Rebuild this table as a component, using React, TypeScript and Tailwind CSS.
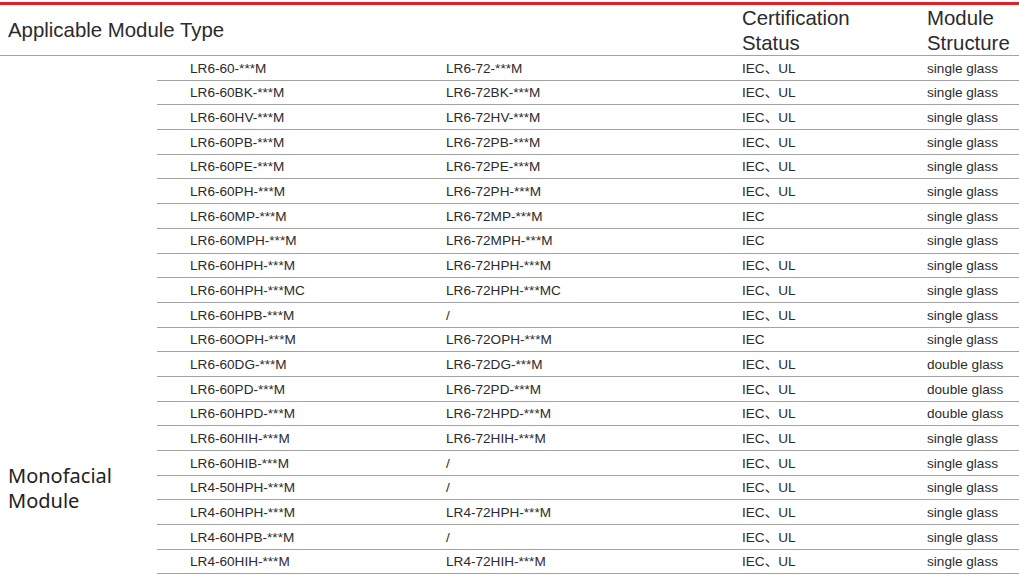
const rows: [string, string, string, string][] = [
  ["LR6-60-***M", "LR6-72-***M", "IEC、UL", "single glass"],
  ["LR6-60BK-***M", "LR6-72BK-***M", "IEC、UL", "single glass"],
  ["LR6-60HV-***M", "LR6-72HV-***M", "IEC、UL", "single glass"],
  ["LR6-60PB-***M", "LR6-72PB-***M", "IEC、UL", "single glass"],
  ["LR6-60PE-***M", "LR6-72PE-***M", "IEC、UL", "single glass"],
  ["LR6-60PH-***M", "LR6-72PH-***M", "IEC、UL", "single glass"],
  ["LR6-60MP-***M", "LR6-72MP-***M", "IEC", "single glass"],
  ["LR6-60MPH-***M", "LR6-72MPH-***M", "IEC", "single glass"],
  ["LR6-60HPH-***M", "LR6-72HPH-***M", "IEC、UL", "single glass"],
  ["LR6-60HPH-***MC", "LR6-72HPH-***MC", "IEC、UL", "single glass"],
  ["LR6-60HPB-***M", "/", "IEC、UL", "single glass"],
  ["LR6-60OPH-***M", "LR6-72OPH-***M", "IEC", "single glass"],
  ["LR6-60DG-***M", "LR6-72DG-***M", "IEC、UL", "double glass"],
  ["LR6-60PD-***M", "LR6-72PD-***M", "IEC、UL", "double glass"],
  ["LR6-60HPD-***M", "LR6-72HPD-***M", "IEC、UL", "double glass"],
  ["LR6-60HIH-***M", "LR6-72HIH-***M", "IEC、UL", "single glass"],
  ["LR6-60HIB-***M", "/", "IEC、UL", "single glass"],
  ["LR4-50HPH-***M", "/", "IEC、UL", "single glass"],
  ["LR4-60HPH-***M", "LR4-72HPH-***M", "IEC、UL", "single glass"],
  ["LR4-60HPB-***M", "/", "IEC、UL", "single glass"],
  ["LR4-60HIH-***M", "LR4-72HIH-***M", "IEC、UL", "single glass"],
];

export default function App() {
  return (
    <div className="w-[1019px] bg-white text-[#2b2b2b] font-['Liberation_Sans',Arial,'Noto_Sans_CJK_SC',sans-serif]">
      <div className="pt-[2px]">
        <div className="border-t-[3px] border-[#e02127]" />
      </div>

      {/* header */}
      <div className="flex h-[51px] pt-[1px] border-b border-[#a3a3a3] text-[20.4px] leading-[25px]">
        <div className="w-[709px] pl-[8px] flex items-center">Applicable Module Type</div>
        <div className="w-[185px] pl-[33px]">
          Certification
          <br />
          Status
        </div>
        <div className="w-[125px] pl-[33px]">
          Module
          <br />
          Structure
        </div>
      </div>

      {/* body */}
      <div className="flex">
        <div className="w-[157px] pl-[8px] pt-[407px] font-['Noto_Sans',sans-serif] text-[20px] leading-[25px] text-[#222]">
          Monofacial
          <br />
          Module
        </div>
        <div className="flex-1">
          {rows.map((r, i) => (
            <div
              key={i}
              className="grid grid-cols-[256px_296px_185px_125px] h-[24.7px] pt-[2px] border-b border-[#a3a3a3] text-[13.6px] items-center"
            >
              <div className="pl-[33px] whitespace-nowrap">{r[0]}</div>
              <div className="pl-[33px] whitespace-nowrap">{r[1]}</div>
              <div className="pl-[33px] whitespace-nowrap">{r[2]}</div>
              <div className="pl-[33px] whitespace-nowrap">{r[3]}</div>
            </div>
          ))}
        </div>
      </div>
    </div>
  );
}
